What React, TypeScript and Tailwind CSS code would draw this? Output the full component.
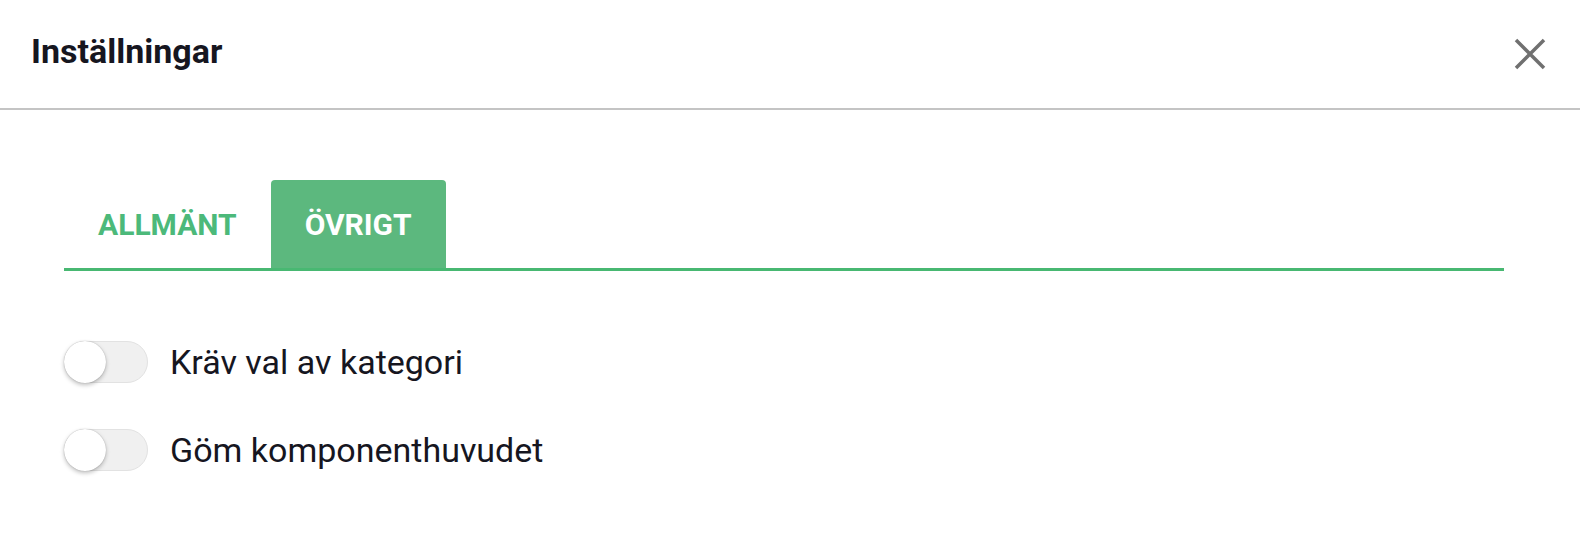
import { useState } from 'react';

const font = { fontFamily: 'Roboto, "Noto Sans", sans-serif' };

function Toggle({ checked, onChange }: { checked: boolean; onChange: () => void }) {
  return (
    <button
      onClick={onChange}
      className={
        'relative shrink-0 w-[84px] h-[42px] rounded-full border transition-colors ' +
        (checked ? 'bg-[#9fd8b4] border-[#8ccfa5]' : 'bg-[#f0f0f0] border-[#e2e2e2]')
      }
    >
      <span
        className={
          'absolute top-[-1px] left-[-1px] w-[42px] h-[42px] rounded-full shadow-[0_2px_4px_rgba(0,0,0,0.25),0_0_1px_rgba(0,0,0,0.3)] transition-transform ' +
          (checked ? 'translate-x-[42px] bg-[#5cb87e]' : 'translate-x-0 bg-white')
        }
      />
    </button>
  );
}

export default function App() {
  const [tab, setTab] = useState<'allmant' | 'ovrigt'>('ovrigt');
  const [requireCategory, setRequireCategory] = useState(false);
  const [hideHeader, setHideHeader] = useState(false);

  const tabs = [
    { id: 'allmant' as const, label: 'Allmänt' },
    { id: 'ovrigt' as const, label: 'Övrigt' },
  ];

  return (
    <div className="w-[1580px] h-[550px] bg-white text-[#16161f]" style={font}>
      <div className="h-[110px] flex items-center justify-between pl-[31px] pr-[34px] border-b-2 border-[#c4c4c4]">
        <h1 className="text-[34px] font-bold leading-none mt-[-6px]">Inställningar</h1>
        <button className="text-[#707070]" aria-label="Stäng">
          <svg width="32" height="32" viewBox="0 0 32 32" fill="none" stroke="currentColor" strokeWidth="3.5">
            <path d="M2 2L30 30M30 2L2 30" />
          </svg>
        </button>
      </div>

      <div className="pl-[64px] pr-[76px] pt-[70px]">
        <div className="flex border-b-[3px] border-[#48b872]">
          {tabs.map((t) => (
            <button
              key={t.id}
              onClick={() => setTab(t.id)}
              className={
                'h-[88px] px-[34px] rounded-t-[4px] text-[30px] font-bold uppercase ' +
                (tab === t.id ? 'bg-[#5cb87e] text-white' : 'text-[#4cb97a]')
              }
            >
              {t.label}
            </button>
          ))}
        </div>

        <div className="pt-[70px] flex flex-col gap-[46px]">
          <label className="h-[42px] flex items-center gap-[22px]">
            <Toggle checked={requireCategory} onChange={() => setRequireCategory(!requireCategory)} />
            <span className="text-[34px] leading-none">Kräv val av kategori</span>
          </label>
          <label className="h-[42px] flex items-center gap-[22px]">
            <Toggle checked={hideHeader} onChange={() => setHideHeader(!hideHeader)} />
            <span className="text-[34px] leading-none">Göm komponenthuvudet</span>
          </label>
        </div>
      </div>
    </div>
  );
}
